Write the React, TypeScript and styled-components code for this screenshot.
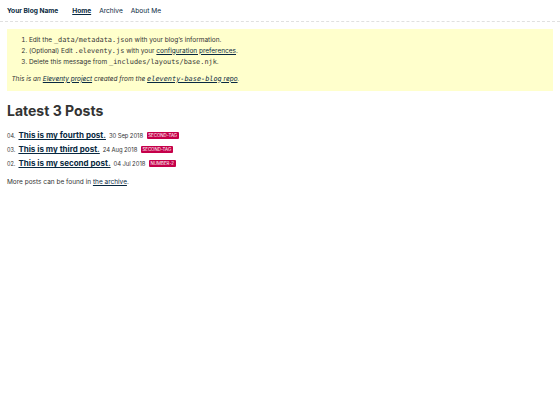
import styled, { createGlobalStyle } from "styled-components";

const red = "#C5004A";
const darkgray = "#333";
const blue = "#082840";
const mono = `"DejaVu Sans Mono", "Liberation Mono", monospace`;

const GlobalStyle = createGlobalStyle`
  * { box-sizing: border-box; }
  html, body {
    margin: 0;
    padding: 0;
    font-family: Inter, "Noto Sans", sans-serif;
    font-size: 6.5px;
    color: ${darkgray};
    background: #fff;
  }
  a { color: ${blue}; }
  code {
    font-family: ${mono};
    font-size: 6.9px;
  }
`;

const Header = styled.header`
  display: flex;
  align-items: baseline;
  border-bottom: 1px dashed #e0e0e0;
`;

const Home = styled.h1`
  margin: 6.5px 0;
  padding: 0 7px;
  font-size: 6.6px;
  line-height: 8px;
  font-weight: 700;

  a { text-decoration: none; }
`;

const Nav = styled.ul`
  display: flex;
  gap: 8px;
  margin: 0 0 0 7px;
  padding: 0;
  list-style: none;
  font-size: 6.6px;
`;

const NavItem = styled.li<{ $active?: boolean }>`
  font-weight: ${(p) => (p.$active ? 700 : 400)};

  a { text-decoration: ${(p) => (p.$active ? "underline" : "none")}; }
`;

const Main = styled.main`
  padding: 7px;
`;

const Warning = styled.div`
  background-color: #ffc;
  padding: 5.5px 4.4px 7px;

  ol {
    margin: 0 0 7px;
    padding-left: 17.5px;
  }
  li {
    line-height: 11px;
  }
  p {
    margin: 0;
    line-height: 9.5px;
  }
`;

const Title = styled.h1`
  margin: 10.5px 0 9.75px;
  font-size: 14px;
  line-height: 17px;
  font-weight: 700;
`;

const PostList = styled.ol`
  list-style: none;
  padding: 0;
  margin: 0;
`;

const PostItem = styled.li`
  &::before {
    content: attr(data-num) ". ";
    display: inline-block;
    font-size: 5.5px;
    line-height: 100%;
    color: ${darkgray};
    white-space: pre;
  }
`;

const PostLink = styled.a`
  display: inline-block;
  padding: 0.25em 0.1875em;
  font-size: 8px;
  font-weight: 700;
`;

const PostDate = styled.time`
  margin-left: 1.5px;
  font-size: 5.9px;
  word-spacing: -0.3px;
`;

const Tag = styled.a`
  display: inline-block;
  vertical-align: text-top;
  text-transform: uppercase;
  font-size: 4.4px;
  padding: 0.9px 1.6px;
  margin-left: 3.5px;
  background-color: ${red};
  color: #fff;
  border-radius: 1px;
  text-decoration: none;
`;

const Para = styled.p`
  margin: 7.5px 0 0;
  line-height: 9.5px;
`;

const posts = [
  { num: "04", title: "This is my fourth post.", date: "30 Sep 2018", tag: "second-tag" },
  { num: "03", title: "This is my third post.", date: "24 Aug 2018", tag: "second-tag" },
  { num: "02", title: "This is my second post.", date: "04 Jul 2018", tag: "number-2" },
];

export default function App() {
  return (
    <>
      <GlobalStyle />
      <Header>
        <Home>
          <a href="#">Your Blog Name</a>
        </Home>
        <Nav>
          <NavItem $active>
            <a href="#">Home</a>
          </NavItem>
          <NavItem>
            <a href="#">Archive</a>
          </NavItem>
          <NavItem>
            <a href="#">About Me</a>
          </NavItem>
        </Nav>
      </Header>
      <Main>
        <Warning>
          <ol>
            <li>
              Edit the <code>_data/metadata.json</code> with your blog’s information.
            </li>
            <li>
              (Optional) Edit <code>.eleventy.js</code> with your{" "}
              <a href="#">configuration preferences</a>.
            </li>
            <li>
              Delete this message from <code>_includes/layouts/base.njk</code>.
            </li>
          </ol>
          <p>
            <em>
              This is an <a href="#">Eleventy project</a> created from the{" "}
              <a href="#">
                <code>eleventy-base-blog</code> repo
              </a>
              .
            </em>
          </p>
        </Warning>
        <Title>Latest 3 Posts</Title>
        <PostList>
          {posts.map((post) => (
            <PostItem key={post.num} data-num={post.num}>
              <PostLink href="#">{post.title}</PostLink>
              <PostDate>{post.date}</PostDate>
              <Tag href="#">{post.tag}</Tag>
            </PostItem>
          ))}
        </PostList>
        <Para>
          More posts can be found in <a href="#">the archive</a>.
        </Para>
      </Main>
    </>
  );
}
